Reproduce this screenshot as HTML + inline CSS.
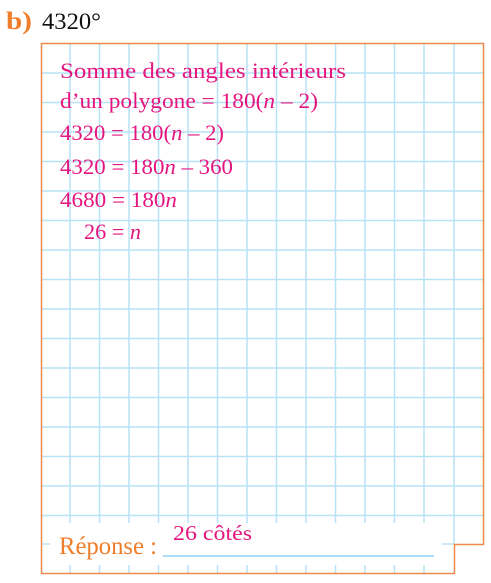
<!DOCTYPE html>
<html><head><meta charset="utf-8"><style>
html,body{margin:0;padding:0;background:#fff;width:491px;height:583px;overflow:hidden}
svg{display:block}
</style></head><body>
<svg width="491" height="583" viewBox="0 0 491 583" xmlns="http://www.w3.org/2000/svg">
<g stroke="#b8e2f6" stroke-width="1.5">
<line x1="70" y1="44" x2="70" y2="523"/>
<line x1="99.5" y1="44" x2="99.5" y2="523"/>
<line x1="129" y1="44" x2="129" y2="523"/>
<line x1="158.5" y1="44" x2="158.5" y2="523"/>
<line x1="188" y1="44" x2="188" y2="523"/>
<line x1="217.5" y1="44" x2="217.5" y2="523"/>
<line x1="247" y1="44" x2="247" y2="523"/>
<line x1="276.5" y1="44" x2="276.5" y2="523"/>
<line x1="306" y1="44" x2="306" y2="523"/>
<line x1="335.5" y1="44" x2="335.5" y2="523"/>
<line x1="365" y1="44" x2="365" y2="523"/>
<line x1="394.5" y1="44" x2="394.5" y2="523"/>
<line x1="424" y1="44" x2="424" y2="523"/>
<line x1="454" y1="44" x2="454" y2="544"/>
<line x1="42" y1="73" x2="483" y2="73"/>
<line x1="42" y1="102.5" x2="483" y2="102.5"/>
<line x1="42" y1="132" x2="483" y2="132"/>
<line x1="42" y1="161.5" x2="483" y2="161.5"/>
<line x1="42" y1="191" x2="483" y2="191"/>
<line x1="42" y1="220.5" x2="483" y2="220.5"/>
<line x1="42" y1="250" x2="483" y2="250"/>
<line x1="42" y1="279.5" x2="483" y2="279.5"/>
<line x1="42" y1="309" x2="483" y2="309"/>
<line x1="42" y1="338.5" x2="483" y2="338.5"/>
<line x1="42" y1="368" x2="483" y2="368"/>
<line x1="42" y1="397.5" x2="483" y2="397.5"/>
<line x1="42" y1="427" x2="483" y2="427"/>
<line x1="42" y1="456.5" x2="483" y2="456.5"/>
<line x1="42" y1="486" x2="483" y2="486"/>
<line x1="42" y1="515.5" x2="483" y2="515.5"/>
<line x1="42" y1="544" x2="50" y2="544"/>
<line x1="442" y1="544" x2="454" y2="544"/>
<line x1="70" y1="565" x2="70" y2="573"/>
<line x1="99.5" y1="565" x2="99.5" y2="573"/>
<line x1="129" y1="565" x2="129" y2="573"/>
<line x1="158.5" y1="565" x2="158.5" y2="573"/>
<line x1="188" y1="565" x2="188" y2="573"/>
<line x1="217.5" y1="565" x2="217.5" y2="573"/>
<line x1="247" y1="565" x2="247" y2="573"/>
<line x1="276.5" y1="565" x2="276.5" y2="573"/>
<line x1="306" y1="565" x2="306" y2="573"/>
<line x1="335.5" y1="565" x2="335.5" y2="573"/>
<line x1="365" y1="565" x2="365" y2="573"/>
<line x1="394.5" y1="565" x2="394.5" y2="573"/>
<line x1="424" y1="565" x2="424" y2="573"/>
</g>
<line x1="163" y1="556" x2="434" y2="556" stroke="#9fd8f4" stroke-width="1.8"/>
<path d="M41.5 43.5 H483.5 V544.5 H454.5 V573.5 H41.5 Z" fill="none" stroke="#ee8a4e" stroke-width="1.5"/>
<g font-family="Liberation Serif, serif">
<text x="6" y="29" font-size="25" font-weight="bold" fill="#ef7d2a" textLength="26" lengthAdjust="spacingAndGlyphs">b)</text>
<text x="42" y="29" font-size="23" fill="#111" textLength="59" lengthAdjust="spacingAndGlyphs">4320°</text>
<g fill="#e5157f" font-size="22">
<text x="60" y="78" textLength="286" lengthAdjust="spacingAndGlyphs">Somme des angles intérieurs</text>
<text x="60" y="108" textLength="258" lengthAdjust="spacingAndGlyphs">d’un polygone = 180(<tspan font-style="italic">n</tspan> – 2)</text>
<text x="60" y="140" textLength="164" lengthAdjust="spacingAndGlyphs">4320 = 180(<tspan font-style="italic">n</tspan> – 2)</text>
<text x="60" y="174" textLength="173" lengthAdjust="spacingAndGlyphs">4320 = 180<tspan font-style="italic">n</tspan> – 360</text>
<text x="60" y="207" textLength="117" lengthAdjust="spacingAndGlyphs">4680 = 180<tspan font-style="italic">n</tspan></text>
<text x="84" y="239" textLength="57" lengthAdjust="spacingAndGlyphs">26 = <tspan font-style="italic">n</tspan></text>
<text x="173" y="540" font-size="21" textLength="79" lengthAdjust="spacingAndGlyphs">26 côtés</text>
</g>
<text x="59" y="554" font-size="25" fill="#ef7d2a" textLength="98" lengthAdjust="spacingAndGlyphs">Réponse :</text>
</g>
</svg>
</body></html>
